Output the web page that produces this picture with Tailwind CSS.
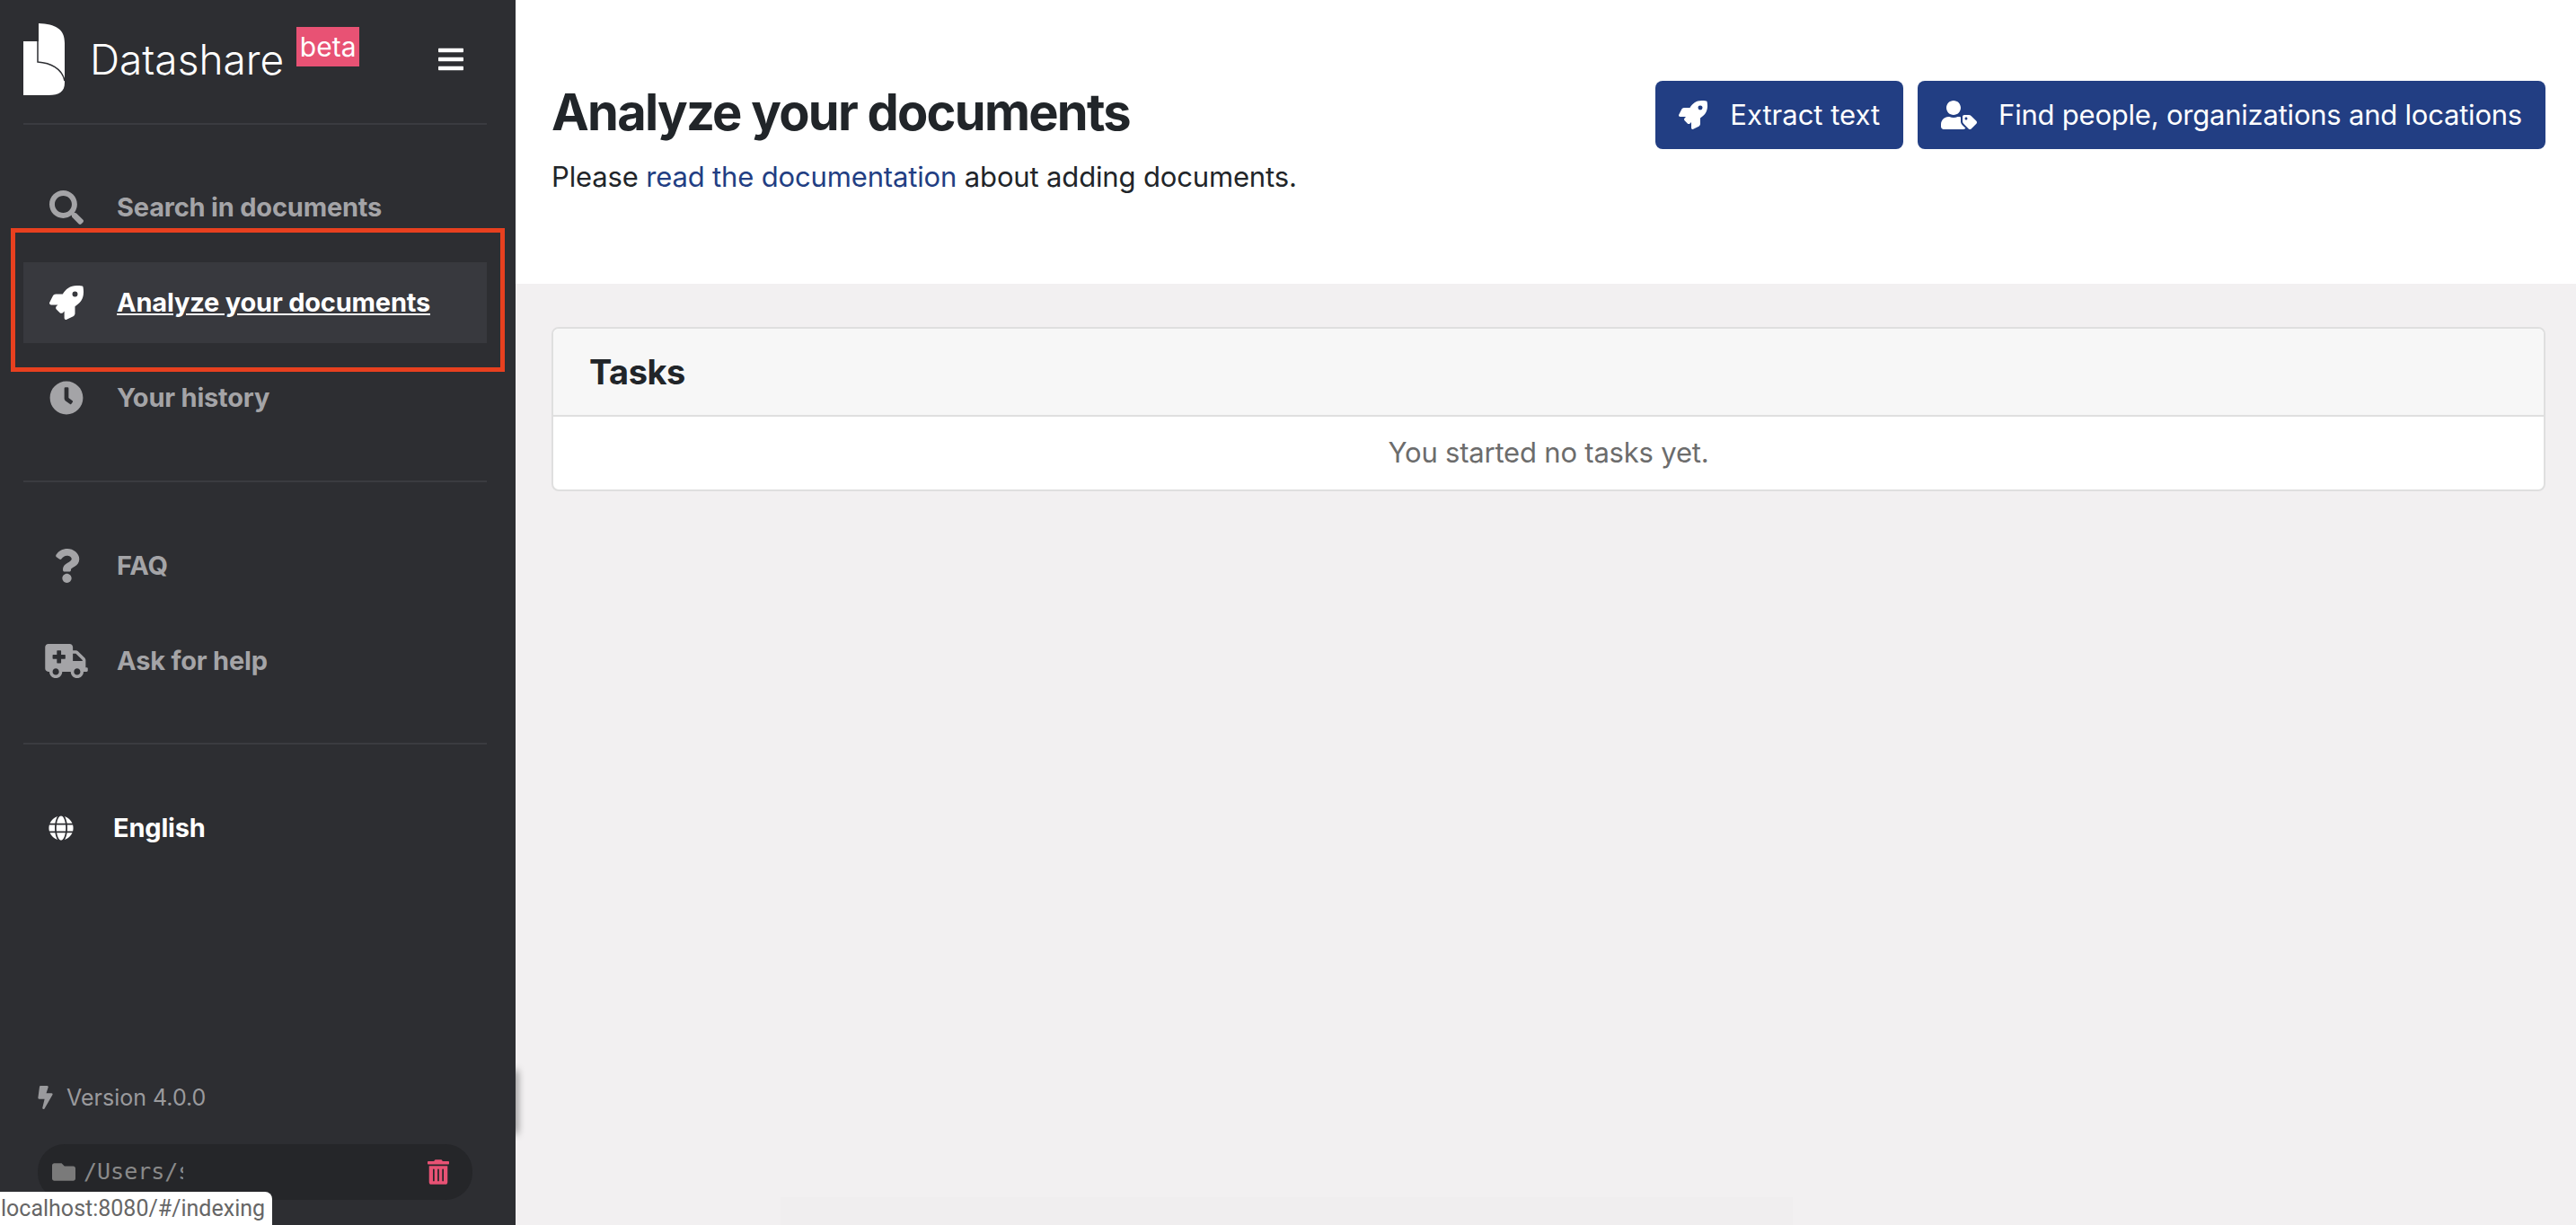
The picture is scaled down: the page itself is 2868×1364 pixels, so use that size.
<!DOCTYPE html>
<html lang="en">
<head>
  <meta charset="UTF-8">
  <title>Datashare - Analyze your documents</title>
  <script src="https://cdn.jsdelivr.net/npm/@tailwindcss/browser@4"></script>
</head>
<body class="relative flex h-screen overflow-hidden bg-[#f2f0f1] font-['Inter',sans-serif] text-[#212529]">
  <!-- SIDEBAR -->
  <aside class="relative z-10 flex w-[574px] shrink-0 flex-col bg-[#2d2e32] pr-[32px] pl-[26px]">
    <div class="flex h-[139px] items-start border-b-2 border-[#3a3b40] pt-[26px]">
      <svg class="h-[80px] w-[46px] shrink-0" viewBox="0 0 46 80">
        <path fill="#fff" d="M17 0C36 1 46 6 46 22V66C46 76 40 80 28 80H0V20H17Z"/>
        <path fill="none" stroke="#2d2e32" stroke-width="1.5" d="M16 20V43C30 44 43 50 46 64"/>
      </svg>
      <span class="ml-[28px] mt-[12px] text-[46px] leading-[56px] font-light text-white">Datashare</span>
      <span class="ml-[14px] mt-[4px] flex h-[44px] w-[70px] items-center justify-center bg-[#e85274] text-[30px] text-white">beta</span>
      <svg class="mt-[24px] ml-auto mr-[26px] h-[32px] w-[28px] fill-white" viewBox="0 0 448 512"><path d="M16 132h416c8.837 0 16-7.163 16-16V76c0-8.837-7.163-16-16-16H16C7.163 60 0 67.163 0 76v40c0 8.837 7.163 16 16 16zm0 160h416c8.837 0 16-7.163 16-16v-40c0-8.837-7.163-16-16-16H16c-8.837 0-16 7.163-16 16v40c0 8.837 7.163 16 16 16zm0 160h416c8.837 0 16-7.163 16-16v-40c0-8.837-7.163-16-16-16H16c-8.837 0-16 7.163-16 16v40c0 8.837 7.163 16 16 16z"/></svg>
    </div>

    <nav class="flex h-[398px] flex-col gap-[16px] border-b-2 border-[#3a3b40] pt-[47px] text-[29px] font-bold tracking-[-0.2px] text-[#a4a4a7]">
      <a class="flex h-[90px] items-center">
        <span class="flex w-[104px] justify-center pr-[8px]"><svg class="h-[38px] w-[38px] fill-[#a4a4a7]" viewBox="0 0 512 512"><path d="M505 442.7L405.3 343c-4.5-4.5-10.6-7-17-7H372c27.6-35.3 44-79.7 44-128C416 93.1 322.9 0 208 0S0 93.1 0 208s93.1 208 208 208c48.3 0 92.7-16.4 128-44v16.3c0 6.4 2.5 12.5 7 17l99.7 99.7c9.4 9.4 24.6 9.4 33.9 0l28.3-28.3c9.4-9.4 9.4-24.6.1-34zM208 336c-70.7 0-128-57.2-128-128 0-70.7 57.2-128 128-128 70.7 0 128 57.2 128 128 0 70.7-57.2 128-128 128z"/></svg></span>
        Search in documents
      </a>
      <a class="flex h-[90px] items-center bg-[#38393e] text-white underline">
        <span class="flex w-[104px] justify-center pr-[8px]"><svg class="h-[38px] w-[38px] fill-white" viewBox="0 0 512 512"><path d="M505.12019,19.09375c-1.18945-5.53125-6.65819-11-12.207-12.1875C460.716,0,435.507,0,410.40747,0,307.17523,0,245.26909,55.20312,199.05238,128H94.83772c-16.34763.01562-35.55658,11.875-42.88664,26.48438L2.51562,253.29688A28.4,28.4,0,0,0,0,264a24.00867,24.00867,0,0,0,24.00582,24H127.81618l-22.47457,22.46875c-11.36521,11.36133-12.99607,32.25781,0,45.25L156.24582,406.625c11.15623,11.1875,32.15619,13.15625,45.27726,0l22.47457-22.46875V488a24.00867,24.00867,0,0,0,24.00581,24,28.55934,28.55934,0,0,0,10.707-2.51562l98.72834-49.39063c14.62888-7.29687,26.50776-26.5,26.50776-42.85937V312.79688c72.59753-46.3125,128.03493-108.40626,128.03493-211.09376C512.07526,76.5,512.07526,51.29688,505.12019,19.09375ZM384.04033,168A40,40,0,1,1,424.05,128,40.02322,40.02322,0,0,1,384.04033,168Z"/></svg></span>
        Analyze your documents
      </a>
      <a class="flex h-[90px] items-center">
        <span class="flex w-[104px] justify-center pr-[8px]"><svg class="h-[38px] w-[38px] fill-[#a4a4a7]" viewBox="0 0 512 512"><path d="M256,8C119,8,8,119,8,256S119,504,256,504,504,393,504,256,393,8,256,8Zm92.49,313h0l-20,25a16,16,0,0,1-22.49,2.5h0l-67-49.72a40,40,0,0,1-15-31.23V112a16,16,0,0,1,16-16h32a16,16,0,0,1,16,16V256l58,42.5A16,16,0,0,1,348.49,321Z"/></svg></span>
        Your history
      </a>
    </nav>

    <nav class="flex h-[292px] flex-col gap-[16px] border-b-2 border-[#3a3b40] pt-[48px] text-[29px] font-bold tracking-[-0.2px] text-[#a4a4a7]">
      <a class="flex h-[90px] items-center">
        <span class="flex w-[104px] justify-center pr-[8px]"><svg class="h-[38px] w-[29px] fill-[#a4a4a7]" viewBox="0 0 384 512"><path d="M202.021 0C122.202 0 70.503 32.703 29.914 91.026c-7.363 10.58-5.093 25.086 5.178 32.874l43.138 32.709c10.373 7.865 25.132 6.026 33.253-4.148 25.049-31.381 43.63-49.449 82.757-49.449 30.764 0 68.816 19.799 68.816 49.631 0 22.552-18.617 34.134-48.993 51.164-35.423 19.86-82.299 44.576-82.299 106.405V320c0 13.255 10.745 24 24 24h72.471c13.255 0 24-10.745 24-24v-5.773c0-42.86 125.268-44.645 125.268-160.627C377.504 66.256 286.902 0 202.021 0zM192 373.459c-38.196 0-69.271 31.075-69.271 69.271 0 38.195 31.075 69.27 69.271 69.27s69.271-31.075 69.271-69.271-31.075-69.27-69.271-69.27z"/></svg></span>
        FAQ
      </a>
      <a class="flex h-[90px] items-center">
        <span class="flex w-[104px] justify-center pr-[8px]"><svg class="h-[38px] w-[48px] fill-[#a4a4a7]" viewBox="0 0 640 512"><path d="M624 352h-16V243.9c0-12.7-5.1-24.9-14.1-33.9L494 110.1c-9-9-21.2-14.1-33.9-14.1H416V48c0-26.5-21.5-48-48-48H48C21.5 0 0 21.5 0 48v320c0 26.5 21.5 48 48 48h16c0 53 43 96 96 96s96-43 96-96h128c0 53 43 96 96 96s96-43 96-96h48c8.8 0 16-7.2 16-16v-32c0-8.8-7.2-16-16-16zM160 464c-26.5 0-48-21.5-48-48s21.5-48 48-48 48 21.5 48 48-21.5 48-48 48zm144-248c0 4.4-3.6 8-8 8h-56v56c0 4.4-3.6 8-8 8h-48c-4.4 0-8-3.6-8-8v-56h-56c-4.4 0-8-3.6-8-8v-48c0-4.4 3.6-8 8-8h56v-56c0-4.4 3.6-8 8-8h48c4.4 0 8 3.6 8 8v56h56c4.4 0 8 3.6 8 8v48zm176 248c-26.5 0-48-21.5-48-48s21.5-48 48-48 48 21.5 48 48-21.5 48-48 48zm80-208H416V144h44.1l99.9 99.9V256z"/></svg></span>
        Ask for help
      </a>
    </nav>

    <div class="flex h-[186px] items-center pl-[28px] text-[29px] font-bold tracking-[-0.2px] text-white">
      <svg class="mr-[44px] h-[28px] w-[28px] fill-white" viewBox="0 0 496 512"><path d="M336.5 160C322 70.7 287.8 8 248 8s-74 62.7-88.5 152h177zM152 256c0 22.2 1.2 43.5 3.3 64h185.3c2.1-20.5 3.3-41.8 3.3-64s-1.2-43.5-3.3-64H155.3c-2.1 20.5-3.3 41.8-3.3 64zm324.7-96c-28.6-67.9-86.5-120.4-158-141.6 24.4 33.8 41.2 84.7 50 141.6h108zM177.2 18.4C105.8 39.6 47.8 92.1 19.3 160h108c8.7-56.9 25.5-107.8 49.9-141.6zM487.4 192H372.7c2.1 21 3.3 42.5 3.3 64s-1.2 43-3.3 64h114.6c5.5-20.5 8.6-41.8 8.6-64s-3.1-43.5-8.5-64zM120 256c0-21.5 1.2-43 3.3-64H8.6C3.2 212.5 0 233.8 0 256s3.2 43.5 8.6 64h114.6c-2-21-3.2-42.5-3.2-64zm39.5 96c14.5 89.3 48.7 152 88.5 152s74-62.7 88.5-152h-177zm159.3 141.6c71.4-21.2 129.4-73.7 158-141.6h-108c-8.8 56.9-25.6 107.8-50 141.6zM19.3 352c28.6 67.9 86.5 120.4 158 141.6-24.4-33.8-41.2-84.7-50-141.6h-108z"/></svg>
      English
    </div>

    <!-- version + data dir, pushed to the bottom -->
    <div class="mt-auto pb-[28px] pl-[16px]">
      <div class="flex items-center text-[25px] text-[#9a9a9d]">
        <svg class="mr-[15px] h-[26px] w-[17px] fill-[#9a9a9d]" viewBox="0 0 320 512"><path d="M296 160H180.6l42.6-129.8C227.2 15 215.7 0 200 0H56C44 0 33.8 8.9 32.2 20.8l-32 240C-1.7 275.2 9.5 288 24 288h118.7L96.6 482.5c-3.6 15.2 8 29.5 23.3 29.5 8.4 0 16.4-4.4 20.8-12l176-304c9.3-15.9-2.2-36-20.7-36z"/></svg>
        Version 4.0.0
      </div>
      <div class="mt-[33px] flex h-[62px] w-[484px] items-center rounded-[30px] bg-[#252629] pl-[16px] pr-[26px]">
        <svg class="mr-[9px] h-[26px] w-[26px] shrink-0 fill-[#7a7a7a]" viewBox="0 0 512 512"><path d="M464 128H272l-64-64H48C21.49 64 0 85.49 0 112v288c0 26.51 21.49 48 48 48h416c26.51 0 48-21.49 48-48V176c0-26.51-21.49-48-48-48z"/></svg>
        <span class="w-[111px] overflow-hidden font-['DejaVu_Sans_Mono',monospace] text-[25px] whitespace-nowrap text-[#8a8a8a]">/Users/soph</span>
        <svg class="ml-auto h-[28px] w-[24px] fill-[#e85274]" viewBox="0 0 448 512"><path d="M32 464a48 48 0 0 0 48 48h288a48 48 0 0 0 48-48V128H32zm272-256a16 16 0 0 1 32 0v224a16 16 0 0 1-32 0zm-96 0a16 16 0 0 1 32 0v224a16 16 0 0 1-32 0zm-96 0a16 16 0 0 1 32 0v224a16 16 0 0 1-32 0zM432 32H312l-9-18.7A24 24 0 0 0 281.5 0h-115a24 24 0 0 0-21.4 13.3L136 32H16A16 16 0 0 0 0 48v32a16 16 0 0 0 16 16h416a16 16 0 0 0 16-16V48a16 16 0 0 0-16-16z"/></svg>
      </div>
    </div>
  </aside>

  <!-- MAIN -->
  <main class="flex min-w-0 flex-1 flex-col">
    <header class="flex h-[316px] items-start justify-between bg-white pt-[90px] pr-[34px] pl-[40px]">
      <div>
        <h1 class="mt-[2px] text-[56px] leading-[66px] font-bold tracking-[-1.75px] text-[#212529]">Analyze your documents</h1>
        <p class="mt-[17px] text-[31px] leading-[44px] tracking-[-0.15px] text-[#212529]">Please <a class="text-[#223e83]">read the documentation</a> about adding documents.</p>
      </div>
      <div class="flex gap-[16px]">
        <button class="flex h-[76px] items-center rounded-[8px] bg-[#223e83] px-[26px] text-[31px] text-white">
          <svg class="mr-[25px] h-[32px] w-[32px] fill-white" viewBox="0 0 512 512"><path d="M505.12019,19.09375c-1.18945-5.53125-6.65819-11-12.207-12.1875C460.716,0,435.507,0,410.40747,0,307.17523,0,245.26909,55.20312,199.05238,128H94.83772c-16.34763.01562-35.55658,11.875-42.88664,26.48438L2.51562,253.29688A28.4,28.4,0,0,0,0,264a24.00867,24.00867,0,0,0,24.00582,24H127.81618l-22.47457,22.46875c-11.36521,11.36133-12.99607,32.25781,0,45.25L156.24582,406.625c11.15623,11.1875,32.15619,13.15625,45.27726,0l22.47457-22.46875V488a24.00867,24.00867,0,0,0,24.00581,24,28.55934,28.55934,0,0,0,10.707-2.51562l98.72834-49.39063c14.62888-7.29687,26.50776-26.5,26.50776-42.85937V312.79688c72.59753-46.3125,128.03493-108.40626,128.03493-211.09376C512.07526,76.5,512.07526,51.29688,505.12019,19.09375ZM384.04033,168A40,40,0,1,1,424.05,128,40.02322,40.02322,0,0,1,384.04033,168Z"/></svg>
          Extract text
        </button>
        <button class="flex h-[76px] items-center rounded-[8px] bg-[#223e83] px-[26px] text-[31px] tracking-[-0.22px] text-white">
          <svg class="mr-[24px] h-[32px] w-[40px] fill-white" viewBox="0 0 640 512"><path d="M630.6 364.9l-90.3-90.2c-12-12-28.3-18.7-45.3-18.7h-79.3c-17.7 0-32 14.3-32 32v79.2c0 17 6.7 33.2 18.7 45.2l90.3 90.2c12.5 12.5 32.8 12.5 45.3 0l92.5-92.5c12.6-12.5 12.6-32.7.1-45.2zm-182.8-21c-13.3 0-24-10.7-24-24s10.7-24 24-24 24 10.7 24 24c0 13.2-10.7 24-24 24zm-223.8-88c70.7 0 128-57.3 128-128C352 57.3 294.7 0 224 0S96 57.3 96 128c0 70.6 57.3 127.9 128 127.9zm127.8 111.2V294c-12.2-3.6-24.9-6.2-38.2-6.2h-16.7c-22.2 10.2-46.9 16-72.9 16s-50.6-5.8-72.9-16h-16.7C60.2 287.9 0 348.1 0 422.3V464c0 26.5 21.5 48 48 48h352c15.5 0 29.1-7.5 37.9-18.9l-58-58c-18.1-18.1-28.1-42.2-28.1-67.9z"/></svg>
          Find people, organizations and locations
        </button>
      </div>
    </header>

    <section class="pt-[48px] pr-[34px] pl-[40px]">
      <div class="overflow-hidden rounded-[8px] border-2 border-[#dfdfdf] bg-white">
        <div class="flex h-[98px] items-center border-b-2 border-[#dfdfdf] bg-[#f7f7f7] pl-[40px] text-[38px] font-bold tracking-[-0.5px] text-[#212529]">Tasks</div>
        <div class="flex h-[81px] items-center justify-center text-[31px] tracking-[-0.2px] text-[#6c6c6c]">You started no tasks yet.</div>
      </div>
    </section>
  </main>

  <!-- leftovers of the screen capture: shadow by the sidebar, faint shape at the bottom -->
  <div class="absolute top-[1192px] left-[570px] h-[70px] w-[6px] bg-black/50 blur-[4px]"></div>
  <div class="absolute top-[1333px] bottom-0 left-[869px] w-[1127px] bg-[#f0eeef]"></div>

  <!-- annotation box drawn over the active menu item -->
  <div class="pointer-events-none absolute top-[254px] left-[12px] z-20 h-[160px] w-[550px] border-[5px] border-[#e8401f]"></div>
  <!-- browser status bubble -->
  <div class="absolute bottom-0 left-0 z-20 flex h-[37px] w-[303px] items-center rounded-tr-[8px] bg-white pl-[1px] font-['Roboto',sans-serif] text-[25px] whitespace-nowrap text-[#666]">localhost:8080/#/indexing</div>
</body>
</html>
